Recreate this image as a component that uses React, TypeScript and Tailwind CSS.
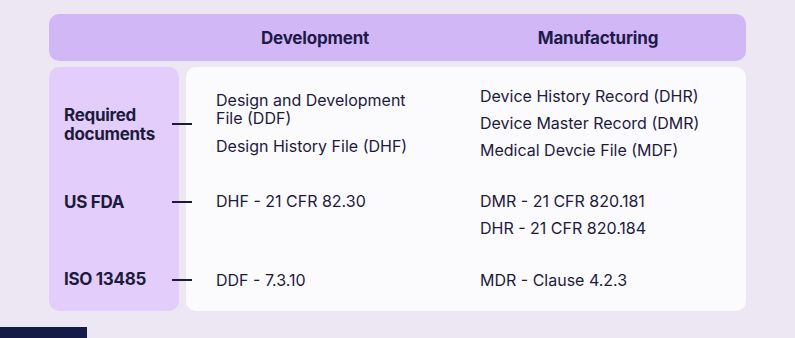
import React from 'react';

const rows = [
  {
    label: ['Required', 'documents'],
    dev: ['Design and Development File (DDF)', 'Design History File (DHF)'],
    manu: ['Device History Record (DHR)', 'Device Master Record (DMR)', 'Medical Devcie File (MDF)'],
  },
  {
    label: ['US FDA'],
    dev: ['DHF - 21 CFR 82.30'],
    manu: ['DMR - 21 CFR 820.181', 'DHR - 21 CFR 820.184'],
  },
  {
    label: ['ISO 13485'],
    dev: ['DDF - 7.3.10'],
    manu: ['MDR - Clause 4.2.3'],
  },
];

const rowStart = ['row-start-2', 'row-start-4', 'row-start-6'];

const App = () => {
  return (
    <div
      className="w-[795px] h-[338px] overflow-hidden bg-[#ede7f3] pt-[14px] text-[#1d1b3c]"
      style={{ fontFamily: 'Inter, "Liberation Sans", sans-serif' }}
    >
      {/* Header */}
      <div className="ml-[49px] w-[697px] h-[47px] rounded-[10px] bg-[#d2b7f7] flex items-center pt-[3px] text-[17px] font-bold tracking-[-0.2px] text-[#1e1a4a]">
        <div className="w-[137px]" />
        <div className="w-[258px] text-center">Development</div>
        <div className="flex-1 text-center pl-[6px]">Manufacturing</div>
      </div>

      {/* Body */}
      <div className="ml-[49px] mt-[6px] w-[697px] grid grid-cols-[123px_20px_24px_264px_266px] grid-rows-[20px_auto_33px_auto_33px_auto_22px] text-[16px] leading-[18px]">
        <div className="col-start-1 col-end-3 row-span-full w-[130px] rounded-[10px] bg-[#e3cefb]" />
        <div className="col-start-2 col-end-6 row-span-full ml-[14px] rounded-[10px] bg-[#fbfafc]" />

        {rows.map((row, i) => (
          <React.Fragment key={i}>
            <div
              className={`${rowStart[i]} col-start-1 ${i === 1 ? 'self-start mt-[1px]' : 'self-center'} ${i === 0 ? 'pt-[4px]' : ''} pl-[15px] font-bold text-[17px] leading-[19px] tracking-[-0.3px]`}
            >
              {row.label.map((l) => (
                <div key={l}>{l}</div>
              ))}
            </div>
            <div className={`${rowStart[i]} col-start-2 ${i === 1 ? 'self-start mt-[9px]' : 'self-center'} ${i === 0 ? 'mt-[2px]' : ''} h-[2px] bg-[#1d1b3c]`} />
            <div className={`${rowStart[i]} col-start-4 ${i === 1 ? 'self-start' : 'self-center'} flex flex-col gap-[10px] w-[215px]`}>
              {row.dev.map((t) => (
                <div key={t}>{t}</div>
              ))}
            </div>
            <div className={`${rowStart[i]} col-start-5 ${i === 1 ? 'self-start' : 'self-center'} flex flex-col gap-[9px]`}>
              {row.manu.map((t) => (
                <div key={t}>{t}</div>
              ))}
            </div>
          </React.Fragment>
        ))}
      </div>

      {/* Cut-off button */}
      <div className="mt-[16px] w-[87px] h-[30px] bg-[#161a46] text-white text-[14px] font-bold pt-[7px] pl-[26px]">
        Quality
      </div>
    </div>
  );
};

export default App;
